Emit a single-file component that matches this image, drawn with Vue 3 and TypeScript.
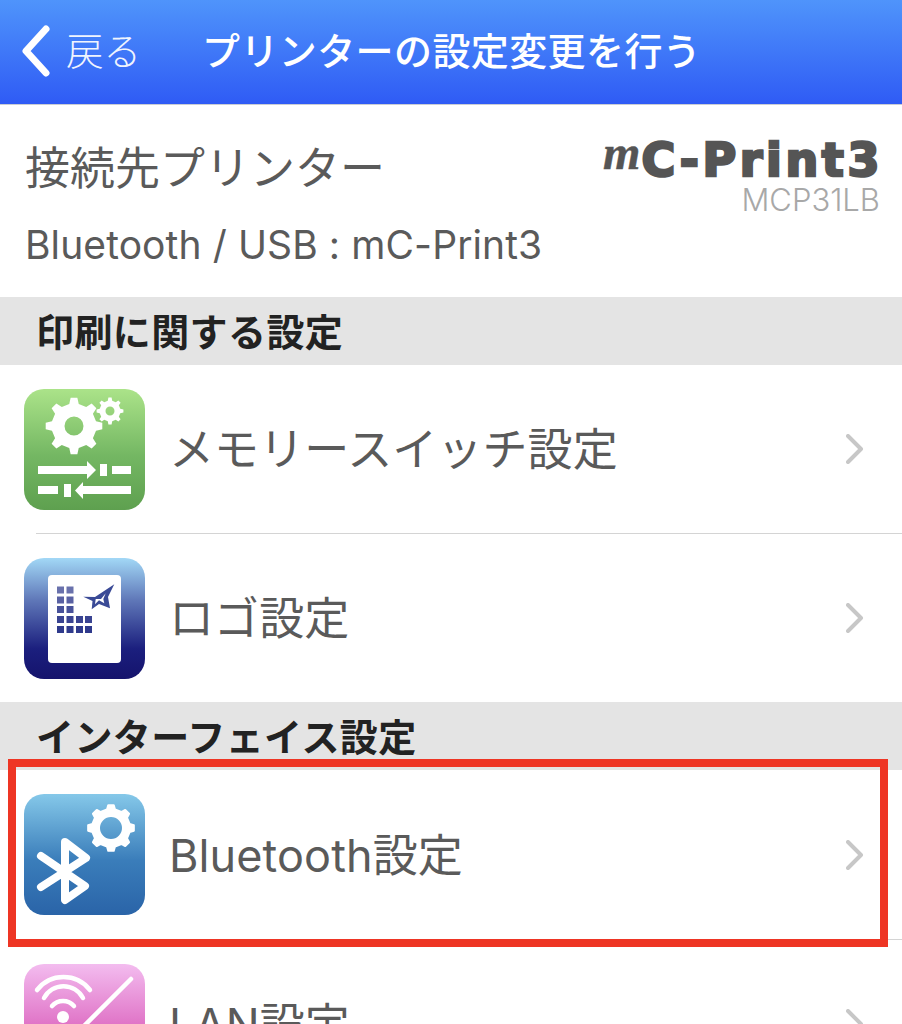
<script setup lang="ts">
// builds a gear outline plus its centre hole (used with fill-rule evenodd)
const gearPath = (cx: number, cy: number, outer: number, root: number, hole: number, teeth: number) => {
  const step = (Math.PI * 2) / teeth;
  const pt = (r: number, a: number) => `${(cx + r * Math.cos(a)).toFixed(2)} ${(cy + r * Math.sin(a)).toFixed(2)}`;
  let d = "";
  for (let i = 0; i < teeth; i++) {
    const a = i * step - Math.PI / 2;
    d += `${i === 0 ? "M" : "L"}${pt(root, a - step * 0.27)}L${pt(outer, a - step * 0.15)}L${pt(outer, a + step * 0.15)}L${pt(root, a + step * 0.27)}`;
  }
  d += `Z M${cx + hole} ${cy}A${hole} ${hole} 0 1 0 ${cx - hole} ${cy}A${hole} ${hole} 0 1 0 ${cx + hole} ${cy}Z`;
  return d;
};

const bigGear = gearPath(50, 37, 28.5, 22.5, 9.5, 8);
const smallGear = gearPath(86, 22, 13.5, 10.5, 4.5, 8);
const btGear = gearPath(87, 34, 23, 19, 12, 8);

const dotCols = [33, 42.5, 52, 61];
const dotRows = [
  { y: 28.5, n: 2, o: 0.72 },
  { y: 38.5, n: 2, o: 0.8 },
  { y: 48, n: 2, o: 0.88 },
  { y: 58, n: 4, o: 0.95 },
  { y: 68, n: 4, o: 1 },
];
</script>

<template>
  <div class="screen">
    <header class="nav">
      <svg class="back-arrow" width="32" height="52" viewBox="0 0 32 52">
        <path d="M26 4 6 26l20 22" fill="none" stroke="#fff" stroke-width="7" stroke-linecap="round" stroke-linejoin="round" />
      </svg>
      <span class="back-label">戻る</span>
      <h1 class="nav-title">プリンターの設定変更を行う</h1>
    </header>

    <section class="info">
      <div class="info-left">
        <div class="info-title">接続先プリンター</div>
        <div class="info-sub">Bluetooth / USB : mC-Print3</div>
      </div>
      <div class="info-right">
        <div class="logo"><span class="logo-m">m</span><span class="logo-name">C-Print3</span></div>
        <div class="model">MCP31LB</div>
      </div>
    </section>

    <div class="section-head">印刷に関する設定</div>

    <div class="row">
      <svg class="app-icon" viewBox="0 0 121 121">
        <defs>
          <linearGradient id="g1" x1="0" y1="0" x2="0" y2="1">
            <stop offset="0" stop-color="#abe389" />
            <stop offset="0.55" stop-color="#74b763" />
            <stop offset="1" stop-color="#5ea04f" />
          </linearGradient>
        </defs>
        <rect width="121" height="121" rx="20" fill="url(#g1)" />
        <path :d="bigGear" fill="#fff" fill-rule="evenodd" />
        <path :d="smallGear" fill="#fff" fill-rule="evenodd" />
        <path d="M14 77h49v-5l9 9-9 9v-5H14z" fill="#fff" />
        <rect x="76" y="75" width="7" height="12" fill="#fff" />
        <rect x="88" y="77" width="19" height="8" fill="#fff" />
        <rect x="14" y="97" width="20" height="8" fill="#fff" />
        <rect x="40" y="95" width="7" height="13" fill="#fff" />
        <path d="M107 97H59v-4l-8 8.500 8 8.500v-5h48z" fill="#fff" />
      </svg>
      <span class="row-label">メモリースイッチ設定</span>
      <svg class="chevron" width="18" height="30" viewBox="0 0 18 30">
        <path d="M2 2l13 13L2 28" fill="none" stroke="#c7c7c7" stroke-width="4" stroke-linecap="round" stroke-linejoin="round" />
      </svg>
    </div>
    <div class="divider"></div>
    <div class="row">
      <svg class="app-icon" viewBox="0 0 121 121">
        <defs>
          <linearGradient id="g2" x1="0" y1="0" x2="0" y2="1">
            <stop offset="0" stop-color="#a2d8f6" />
            <stop offset="0.35" stop-color="#5f77b8" />
            <stop offset="0.75" stop-color="#1b1f7e" />
            <stop offset="1" stop-color="#15136c" />
          </linearGradient>
        </defs>
        <rect width="121" height="121" rx="20" fill="url(#g2)" />
        <rect x="24" y="17" width="73" height="88" rx="4" fill="#fff" />
        <template v-for="r in dotRows" :key="r.y">
          <rect v-for="x in dotCols.slice(0, r.n)" :key="x" :x="x" :y="r.y" width="7" height="7" fill="#2f3a8c" :opacity="r.o" />
        </template>
        <path d="M59.300 38.700 71 39 90.300 26.300 84 39 86 50.300 75 46 67.700 51.300 68.500 43Z" fill="#3a4a96" />
        <path d="M71.700 41 77 41 81.700 35.300 79.300 41 80.300 45.300 75 42.300 71 46.300Z" fill="#fff" />
      </svg>
      <span class="row-label">ロゴ設定</span>
      <svg class="chevron" width="18" height="30" viewBox="0 0 18 30">
        <path d="M2 2l13 13L2 28" fill="none" stroke="#c7c7c7" stroke-width="4" stroke-linecap="round" stroke-linejoin="round" />
      </svg>
    </div>

    <div class="section-head">インターフェイス設定</div>

    <div class="row row-tall">
      <svg class="app-icon" viewBox="0 0 121 121">
        <defs>
          <linearGradient id="g3" x1="0" y1="0" x2="0" y2="1">
            <stop offset="0" stop-color="#85c8e9" />
            <stop offset="0.55" stop-color="#3a7dba" />
            <stop offset="1" stop-color="#2a64a8" />
          </linearGradient>
        </defs>
        <rect width="121" height="121" rx="20" fill="url(#g3)" />
        <path :d="btGear" fill="#fff" fill-rule="evenodd" stroke="#fff" stroke-width="2" stroke-linejoin="round" />
        <path d="M17 62 61 92 41 106V48L62 64 17 93" fill="none" stroke="#fff" stroke-width="8" stroke-linecap="round" stroke-linejoin="round" />
      </svg>
      <span class="row-label">Bluetooth設定</span>
      <svg class="chevron" width="18" height="30" viewBox="0 0 18 30">
        <path d="M2 2l13 13L2 28" fill="none" stroke="#c7c7c7" stroke-width="4" stroke-linecap="round" stroke-linejoin="round" />
      </svg>
    </div>
    <div class="divider"></div>
    <div class="row">
      <svg class="app-icon" viewBox="0 0 121 121">
        <defs>
          <linearGradient id="g4" x1="0" y1="0" x2="0" y2="1">
            <stop offset="0" stop-color="#f3bcef" />
            <stop offset="0.6" stop-color="#dc66bf" />
            <stop offset="1" stop-color="#d24fae" />
          </linearGradient>
        </defs>
        <rect width="121" height="121" rx="20" fill="url(#g4)" />
        <g fill="none" stroke="#fff" stroke-width="4.500" stroke-linecap="round">
          <path d="M13 26A33.500 33.500 0 0 1 66 26" />
          <path d="M20 34A22 22 0 0 1 59 34" />
          <path d="M28 42A14.600 14.600 0 0 1 50 42" />
          <path d="M107 15 20 102" />
        </g>
        <circle cx="39" cy="53" r="6" fill="#fff" />
        <rect x="76" y="60" width="18" height="30" fill="#fff" />
      </svg>
      <span class="row-label">LAN設定</span>
      <svg class="chevron" width="18" height="30" viewBox="0 0 18 30">
        <path d="M2 2l13 13L2 28" fill="none" stroke="#c7c7c7" stroke-width="4" stroke-linecap="round" stroke-linejoin="round" />
      </svg>
    </div>

    <div class="highlight"></div>
  </div>
</template>

<style scoped>
.screen {
  position: relative;
  width: 902px;
  height: 1024px;
  overflow: hidden;
  background: #fff;
  font-family: Inter, "Noto Sans CJK JP", sans-serif;
}

.nav {
  display: flex;
  align-items: center;
  height: 104px;
  padding-left: 20px;
  border-bottom: 1px solid #c9ccd4;
  background: linear-gradient(#4f94fb, #2f5bf5);
  color: #fff;
}

.back-arrow {
  flex: none;
  margin-bottom: 2px;
}

.back-label {
  margin: 0 0 8px 14px;
  font-size: 37.500px;
  font-weight: 300;
  opacity: 0.92;
}

.nav-title {
  margin: 0 0 8px 61px;
  font-size: 38px;
  font-weight: 500;
  letter-spacing: 0.400px;
  white-space: nowrap;
}

.info {
  display: flex;
  justify-content: space-between;
  height: 192px;
  padding: 0 22px 0 25px;
  color: #5a5a5a;
}

.info-left {
  display: flex;
  flex-direction: column;
  padding-top: 31px;
}

.info-title {
  font-size: 45px;
  line-height: 66px;
}

.info-sub {
  margin-top: 18px;
  font-size: 39px;
  letter-spacing: 0.100px;
  line-height: 50px;
}

.info-right {
  display: flex;
  flex-direction: column;
  align-items: flex-end;
  padding-top: 30px;
}

.logo {
  display: flex;
  align-items: flex-start;
  height: 50px;
  color: #555;
}

.logo-m {
  margin-right: 1px;
  font-family: "Liberation Serif", serif;
  font-style: italic;
  font-weight: 700;
  font-size: 48px;
  line-height: 36px;
  -webkit-text-stroke: 0.500px #555;
}

.logo-name {
  margin-right: -3px;
  font-family: "DejaVu Sans", sans-serif;
  font-weight: 700;
  font-size: 46px;
  line-height: 50px;
  letter-spacing: 3.600px;
  -webkit-text-stroke: 2.600px #555;
}

.model {
  font-size: 31px;
  font-weight: 300;
  line-height: 30px;
  color: #a8a8a8;
}

.section-head {
  display: flex;
  align-items: center;
  box-sizing: border-box;
  height: 68px;
  padding: 0 0 3px 36px;
  background: #e4e4e4;
  color: #222;
  font-size: 38px;
  font-weight: 700;
  letter-spacing: 0.400px;
}

.row {
  display: flex;
  align-items: center;
  height: 168px;
  padding: 0 38px 0 24px;
  color: #5a5a5a;
}

.row-tall {
  height: 169px;
}

.app-icon {
  flex: none;
  width: 121px;
  height: 121px;
}

.row-label {
  flex: 1;
  margin: 0 0 5px 24px;
  font-size: 45px;
  letter-spacing: 0.100px;
}

.chevron {
  flex: none;
}

.divider {
  height: 1px;
  margin-left: 36px;
  background: #d4d4d4;
}

.highlight {
  position: absolute;
  left: 8px;
  top: 759px;
  width: 880px;
  height: 188px;
  box-sizing: border-box;
  border: 8px solid #ee3524;
}
</style>
